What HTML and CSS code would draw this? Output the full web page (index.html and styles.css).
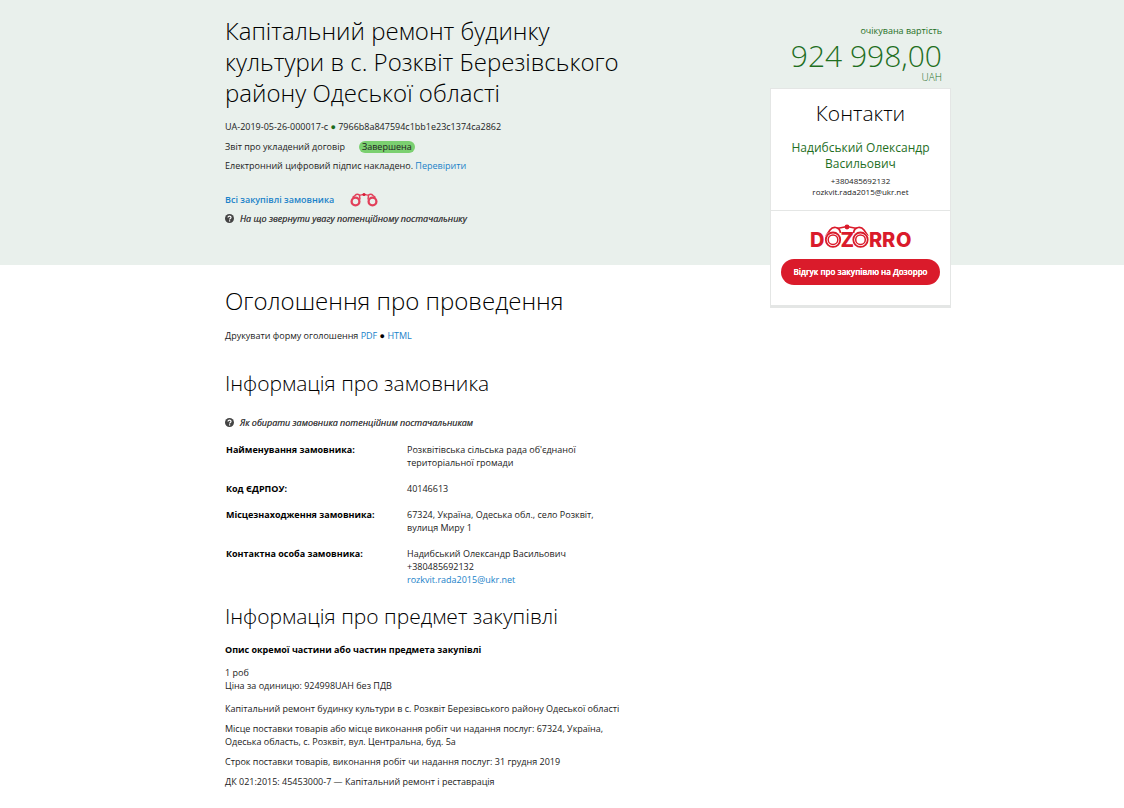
FILE: index.html
```html
<!DOCTYPE html>
<html lang="uk">
<head>
<meta charset="utf-8">
<title>Капітальний ремонт будинку культури</title>
<link rel="stylesheet" href="styles.css">
</head>
<body>
<header class="hero">
  <div class="wrap hero-grid">
    <div class="summary">
      <h1 class="title">Капітальний ремонт будинку культури в с. Розквіт Березівського району Одеської області</h1>
      <p class="meta">UA-2019-05-26-000017-c <span class="dot dot-green">●</span> 7966b8a847594c1bb1e23c1374ca2862</p>
      <p class="meta meta-status">Звіт про укладений договір <span class="status">Завершена</span></p>
      <p class="meta">Електронний цифровий підпис накладено. <a href="#">Перевірити</a></p>
      <p class="buyer-links">
        <a class="strong-link" href="#">Всі закупівлі замовника</a>
        <a class="binoculars" href="#" aria-label="Dozorro">
          <svg width="28" height="16" viewBox="0 0 28 16" fill="none" stroke="#e2405a">
            <circle cx="5.500" cy="10.500" r="3.900" stroke-width="2.300"/>
            <circle cx="22.500" cy="10.500" r="3.900" stroke-width="2.300"/>
            <path d="M2.500 6.500 5 4.500C6.500 2.800 9 3 9.500 4.500L10 8.500M25.500 6.500 23 4.500C21.500 2.800 19 3 18.500 4.500L18 8.500" stroke-width="1.500"/>
            <path d="M9 4.300 14 3.300 19 4.300" stroke-width="1.200"/>
            <circle cx="14" cy="3.500" r="1.600" fill="#d91a35" stroke="none"/>
          </svg>
        </a>
      </p>
      <p class="hint"><svg class="help" width="9" height="9" viewBox="0 0 18 18"><circle cx="9" cy="9" r="9" fill="#444"/><path d="M6 7.200C6 3 12.200 3.500 12 7c0 2-2.800 2-2.800 4.200M9.200 12.500v2.500" fill="none" stroke="#fff" stroke-width="2.400"/></svg><a href="#">На що звернути увагу потенційному постачальнику</a></p>
    </div>
    <aside class="side">
      <div class="price-label">очікувана вартість</div>
      <div class="price">924 998,00</div>
      <div class="currency">UAH</div>
      <div class="card">
        <section class="contacts">
          <h2 class="card-title">Контакти</h2>
          <div class="person">Надибський Олександр Васильович</div>
          <div class="contact-line">+380485692132</div>
          <div class="contact-line">rozkvit.rada2015@ukr.net</div>
        </section>
        <section class="review">
          <svg class="logo" width="103" height="25" viewBox="0 0 103 25">
            <text class="logo-text" x="1 16.500 31.500 43.500 60 73 87" y="23">DOZORRO</text>
            <g stroke="#da1b2b" fill="#fff">
              <path d="M17 12 21 6C24 2 30 3 31 7L31.500 9M59 12 55 6C52 2 46 3 45 7L44.500 9" fill="none" stroke-width="1.700"/>
              <path d="M28 4.500 38 2.500 48 4.500" fill="none" stroke-width="1.500"/>
              <circle cx="24" cy="15.700" r="8" stroke="#fff" stroke-width="0.800"/>
              <circle cx="51.500" cy="15.700" r="8" stroke="#fff" stroke-width="0.800"/>
              <circle cx="24" cy="15.700" r="7.200" stroke-width="1.800"/>
              <circle cx="51.500" cy="15.700" r="7.200" stroke-width="1.800"/>
              <circle cx="24" cy="15.700" r="4.800" stroke-width="1.500"/>
              <circle cx="51.500" cy="15.700" r="4.800" stroke-width="1.500"/>
              <circle cx="38" cy="3" r="2.400" fill="#da1b2b" stroke="none"/>
            </g>
          </svg>
          <a class="review-button" href="#">Відгук про закупівлю на Дозорро</a>
        </section>
      </div>
    </aside>
  </div>
</header>
<main class="wrap">
  <div class="content">
    <h2 class="heading heading-large">Оголошення про проведення</h2>
    <p class="print">Друкувати форму оголошення <a href="#">PDF</a> <span class="dot">●</span> <a href="#">HTML</a></p>
    <h3 class="heading">Інформація про замовника</h3>
    <p class="hint hint-buyer"><svg class="help" width="9" height="9" viewBox="0 0 18 18"><circle cx="9" cy="9" r="9" fill="#444"/><path d="M6 7.200C6 3 12.200 3.500 12 7c0 2-2.800 2-2.800 4.200M9.200 12.500v2.500" fill="none" stroke="#fff" stroke-width="2.400"/></svg><a href="#">Як обирати замовника потенційним постачальникам</a></p>
    <table class="details">
      <tr><th scope="row">Найменування замовника:</th><td>Розквітівська сільська рада об'єднаної територіальної громади</td></tr>
      <tr><th scope="row">Код ЄДРПОУ:</th><td>40146613</td></tr>
      <tr><th scope="row">Місцезнаходження замовника:</th><td>67324, Україна, Одеська обл., село Розквіт, вулиця Миру 1</td></tr>
      <tr><th scope="row">Контактна особа замовника:</th><td>Надибський Олександр Васильович<br>+380485692132<br><a href="#">rozkvit.rada2015@ukr.net</a></td></tr>
    </table>
    <h3 class="heading heading-item">Інформація про предмет закупівлі</h3>
    <h4 class="subheading">Опис окремої частини або частин предмета закупівлі</h4>
    <p class="quantity">1 роб<br>Ціна за одиницю: 924998UAH без ПДВ</p>
    <p class="item-line">Капітальний ремонт будинку культури в с. Розквіт Березівського району Одеської області</p>
    <p class="item-line">Місце поставки товарів або місце виконання робіт чи надання послуг: 67324, Україна, Одеська область, с. Розквіт, вул. Центральна, буд. 5а</p>
    <p class="item-line">Строк поставки товарів, виконання робіт чи надання послуг: 31 грудня 2019</p>
    <p class="item-line">ДК 021:2015: 45453000-7 — Капітальний ремонт і реставрація</p>
  </div>
</main>
</body>
</html>
```
FILE: styles.css
```css
* { box-sizing: border-box; }
body {
  margin: 0;
  background: #fff;
  color: #222;
  font-family: "Open Sans", sans-serif;
  font-size: 9px;
  line-height: 13px;
}
h1, h2, h3, h4, p { margin: 0; }
a { color: #1a82c9; text-decoration: none; }
.wrap { margin: 0 173px 0 225px; }
.hero { background: #e9f0ec; }
.hero-grid {
  display: grid;
  grid-template-columns: minmax(0, 1fr) 181px;
  column-gap: 130px;
}
.summary { padding: 15px 0 40px; }
.title, .heading, .card-title { color: #000; font-weight: 300; }
.title {
  margin-bottom: 12px;
  font-size: 24px;
  line-height: 31px;
}
.meta { margin-bottom: 7px; }
.meta-status { display: flex; align-items: center; gap: 14px; margin-bottom: 6px; }
.dot { color: #000; }
.dot-green { color: #1a6b1a; }
.status {
  padding: 0 3px;
  border-radius: 6px;
  background: #7bd070;
  line-height: 12px;
}
.buyer-links {
  display: flex;
  align-items: center;
  gap: 16px;
  padding-top: 12px;
}
.strong-link { font-weight: 600; }
.binoculars { display: flex; }
.hint {
  display: flex;
  align-items: center;
  gap: 6px;
  margin-top: 5px;
  font-style: italic;
  text-shadow: 0 0 currentColor;
}
.hint a { color: #444; }
.side {
  margin-bottom: -80px;
  padding-top: 24px;
}
.price-label, .price, .currency {
  padding-right: 9px;
  color: #1f6f1f;
  text-align: right;
}
.price {
  font-size: 30px;
  font-weight: 300;
  line-height: 38px;
}
.currency { margin-bottom: 9px; font-size: 10px; font-weight: 300; line-height: 4px; }
.card {
  border: 1px solid #e4e6e5;
  border-bottom-width: 3px;
  background: #fff;
  text-align: center;
}
.contacts { padding: 10px 12px 12px; }
.card-title { margin-bottom: 12px; font-size: 21px; line-height: 29px; }
.person {
  margin-bottom: 3px;
  color: #1f6f1f;
  font-size: 12px;
  line-height: 16px;
}
.contact-line { font-size: 8px; line-height: 11px; }
.contact-line:last-child { margin-bottom: 1px; }
.review {
  padding: 13px 10px 20px;
  border-top: 1px solid #e4e6e5;
}
.logo {
  display: block;
  margin: 0 auto 10px;
  overflow: visible;
}
.logo-text {
  fill: #da1b2b;
  font-family: Inter, sans-serif;
  font-size: 20px;
  font-weight: 800;
}
.review-button {
  display: block;
  border-radius: 13px;
  background: #da1b2b;
  color: #fff;
  font-size: 8px;
  font-weight: 600;
  line-height: 26px;
  text-shadow: 0 0 currentColor;
}
.content { max-width: 416px; }
.heading { font-size: 21px; line-height: 30px; }
.heading-large {
  padding-top: 20px;
  font-size: 24px;
  line-height: 32px;
}
.print { margin: 12px 0 26px; }
.hint-buyer { margin-top: 18px; }
.details {
  width: 100%;
  margin: 13px 0 15px;
  border-collapse: collapse;
}
.details th, .details td {
  padding: 1px 1px 12px;
  text-align: left;
  vertical-align: top;
}
.details th { width: 181px; color: #000; font-weight: 700; }
.details td { padding-right: 30px; }
.details tr:last-child > * { padding-bottom: 0; }
.subheading { margin: 12px 0 10px; color: #000; font-size: 9px; font-weight: 700; }
.quantity { margin-bottom: 10px; }
.item-line { margin-bottom: 7px; }
```
